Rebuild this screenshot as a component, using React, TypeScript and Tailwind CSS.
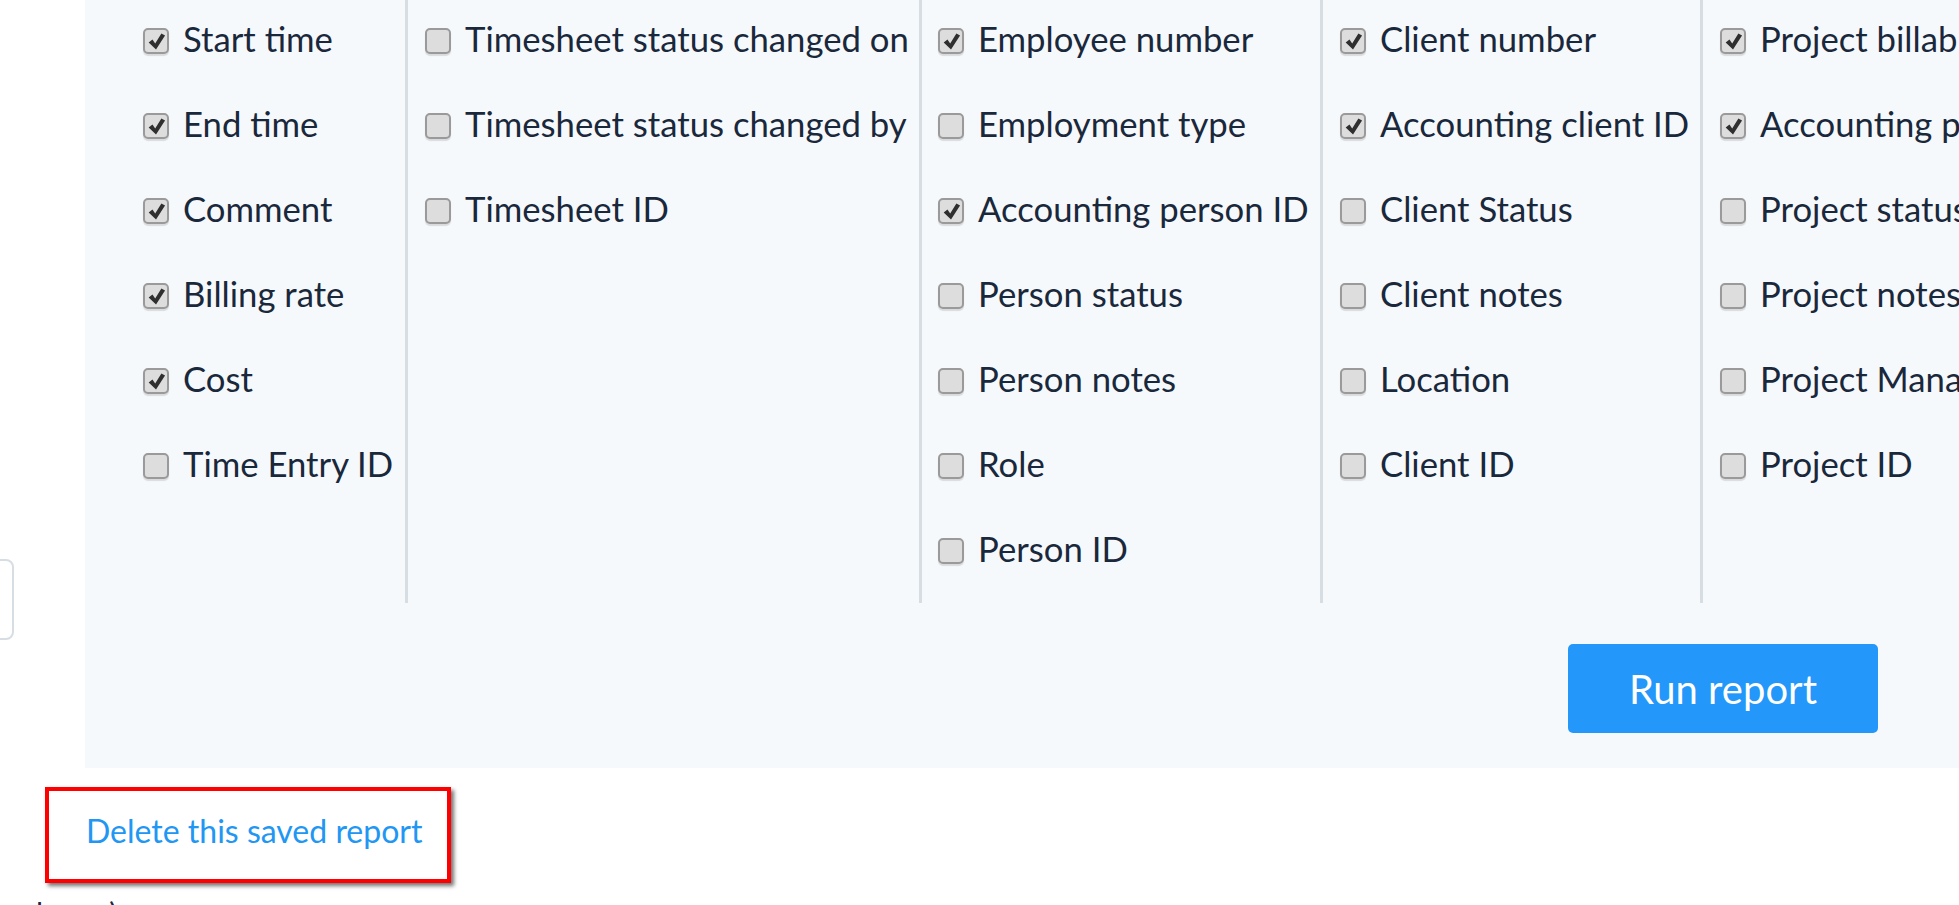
import React from "react"

type Field = { label: string; checked: boolean }

const columns: { width: string; fields: Field[] }[] = [
  {
    width: "w-[320px] pl-[58px]",
    fields: [
      { label: "Start time", checked: true },
      { label: "End time", checked: true },
      { label: "Comment", checked: true },
      { label: "Billing rate", checked: true },
      { label: "Cost", checked: true },
      { label: "Time Entry ID", checked: false },
    ],
  },
  {
    width: "w-[514px] pl-[17px] border-l-[3px]",
    fields: [
      { label: "Timesheet status changed on", checked: false },
      { label: "Timesheet status changed by", checked: false },
      { label: "Timesheet ID", checked: false },
    ],
  },
  {
    width: "w-[401px] pl-[16px] border-l-[3px]",
    fields: [
      { label: "Employee number", checked: true },
      { label: "Employment type", checked: false },
      { label: "Accounting person ID", checked: true },
      { label: "Person status", checked: false },
      { label: "Person notes", checked: false },
      { label: "Role", checked: false },
      { label: "Person ID", checked: false },
    ],
  },
  {
    width: "w-[380px] pl-[17px] border-l-[3px]",
    fields: [
      { label: "Client number", checked: true },
      { label: "Accounting client ID", checked: true },
      { label: "Client Status", checked: false },
      { label: "Client notes", checked: false },
      { label: "Location", checked: false },
      { label: "Client ID", checked: false },
    ],
  },
  {
    width: "min-w-0 flex-1 pl-[17px] border-l-[3px]",
    fields: [
      { label: "Project billable", checked: true },
      { label: "Accounting project ID", checked: true },
      { label: "Project status", checked: false },
      { label: "Project notes", checked: false },
      { label: "Project Manager", checked: false },
      { label: "Project ID", checked: false },
    ],
  },
]

function Checkbox({ checked }: { checked: boolean }) {
  return (
    <span className="mt-[3px] flex h-[26px] w-[26px] shrink-0 items-center justify-center rounded-[5px] border-2 border-[#9a9a9a] bg-[#dddddd] shadow-[0_2px_1px_rgba(0,0,0,0.12)]">
      {checked && (
        <svg viewBox="0 0 16 16" className="h-[19px] w-[19px]">
          <path d="M1.4 8.8 L4.6 6.4 L6.9 9.6 L12.1 1.2 L15.2 3.0 L7.6 14.8 Z" fill="#2f2f2f" />
        </svg>
      )}
    </span>
  )
}

export default function App() {
  return (
    <div className="relative h-[905px] w-[1959px] overflow-hidden bg-white font-['Lato','Liberation_Sans',sans-serif] text-[#1a283c]">
      <div className="flex">
        {/* left gutter, the input behind is cut off */}
        <div className="w-[85px] shrink-0">
          <div className="-ml-[26px] mt-[559px] h-[81px] w-[40px] rounded-lg border-2 border-[#d6dde3]" />
        </div>

        <div className="flex h-[768px] min-w-0 flex-1 flex-col overflow-hidden bg-[#f6f9fb]">
          <div className="-mt-[3px] flex h-[606px]">
            {columns.map((col, i) => (
              <div key={i} className={`${col.width} shrink-0 border-[#d6dde3]`}>
                {col.fields.map((f) => (
                  <div key={f.label} className="flex h-[85px] items-center gap-[14px] whitespace-nowrap">
                    <Checkbox checked={f.checked} />
                    <span className="text-[34.7px]">{f.label}</span>
                  </div>
                ))}
              </div>
            ))}
          </div>

          <div className="mt-[41px] flex justify-end pr-[81px]">
            <button className="flex h-[89px] w-[310px] items-center justify-center rounded-[5px] bg-[#2397fa] text-[40px] text-white">
              Run report
            </button>
          </div>
        </div>
      </div>

      <div className="ml-[45px] mt-[19px] h-[96px] w-[406px] border-4 border-[#ff0000] pl-[37px] pt-[16px] shadow-[3px_3px_4px_rgba(0,0,0,0.55)]">
        <a href="#" className="text-[32px] text-[#2196f3]">
          Delete this saved report
        </a>
      </div>

      <div className="ml-[36px] mt-[8px] text-[30px]">lower)</div>
    </div>
  )
}
